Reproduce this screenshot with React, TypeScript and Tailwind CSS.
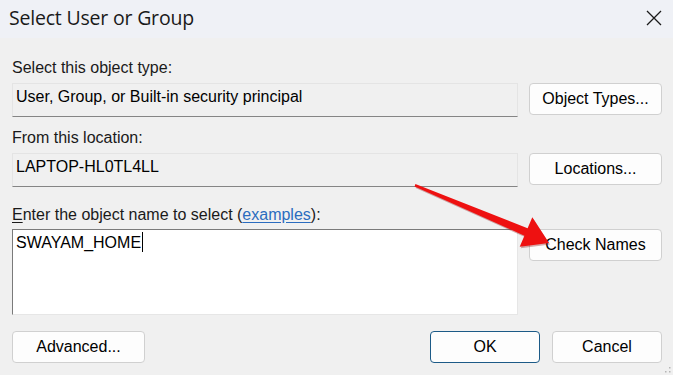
import React from "react";

const DialogButton = ({
  label,
  width = "w-[133px]",
  primary = false,
}: {
  label: string;
  width?: string;
  primary?: boolean;
}) => (
  <div
    className={`${width} h-[32px] flex items-center justify-center rounded-[4px] bg-[#fdfdfd] border ${
      primary ? "border-[#1c5a87]" : "border-[#d0d0d0]"
    } text-[16px] leading-[18px] text-black`}
  >
    {label}
  </div>
);

const ReadOnlyBox = ({ value }: { value: string }) => (
  <div className="w-[506px] h-[34px] bg-[#f0f0f0] border border-[#e4e4e4] border-b-[#858585] pl-[3px] pt-[4px] leading-[18px]">
    {value}
  </div>
);

export default function App() {
  return (
    <div className="relative w-[673px] h-[375px] overflow-hidden bg-[#f0f0f0] font-['Liberation_Sans',Arial,sans-serif] text-[16px] text-black">
      {/* Title bar */}
      <div className="h-[38px] bg-[#eff1f6] flex items-center justify-between pl-[9px] pr-[11px]">
        <span className="font-['Open_Sans',sans-serif] text-[19.5px] leading-[24px] tracking-[-0.2px] text-[#1a1a1a] mt-[-3px]">
          Select User or Group
        </span>
        <svg width="16" height="16" viewBox="0 0 16 16" className="mt-[-3px]">
          <path d="M1 1 L15 15 M15 1 L1 15" stroke="#1a1a1a" strokeWidth="1.3" />
        </svg>
      </div>

      {/* Body */}
      <div className="pl-[12px] pr-[11px]">
        <div className="mt-[21px] leading-[18px] text-[#1a1a1a]">Select this object type:</div>
        <div className="mt-[6px] flex justify-between items-start">
          <ReadOnlyBox value="User, Group, or Built-in security principal" />
          <DialogButton label="Object Types..." />
        </div>

        <div className="mt-[12px] leading-[18px] text-[#1a1a1a]">From this location:</div>
        <div className="mt-[6px] flex justify-between items-start">
          <ReadOnlyBox value="LAPTOP-HL0TL4LL" />
          <DialogButton label="Locations..." />
        </div>

        <div className="mt-[19px] leading-[18px] text-[#1a1a1a]">
          <span className="underline underline-offset-2">E</span>nter the object name to select (
          <span className="text-[#2a6cbf] underline underline-offset-2">examples</span>):
        </div>
        <div className="mt-[5px] flex justify-between items-start">
          <div className="w-[506px] h-[86px] bg-white border border-[#e6e6e6] border-l-[#7a7a7a] border-t-[#7a7a7a] pl-[3px] pt-[2px] leading-[18px]">
            SWAYAM_HOME
            <span className="inline-block w-px h-[20px] bg-black align-[-4px] ml-px" />
          </div>
          <DialogButton label="Check Names" />
        </div>

        <div className="mt-[16px] flex items-center">
          <DialogButton label="Advanced..." />
          <div className="flex-1" />
          <DialogButton label="OK" width="w-[110px]" primary />
          <div className="w-[12px]" />
          <DialogButton label="Cancel" width="w-[110px]" />
        </div>
      </div>

      {/* Red annotation arrow */}
      <svg
        className="absolute left-0 top-0 pointer-events-none"
        width="673"
        height="375"
        viewBox="0 0 673 375"
      >
        <polygon
          points="415.4,184 527.6,228.3 532.3,217.3 549,243 519.7,246.7 524.4,235.7 414.6,186.5"
          fill="#8b0d0d"
          opacity="0.35"
          transform="translate(1,1.5)"
        />
        <polygon
          points="415.4,184 527.6,228.3 532.3,217.3 549,243 519.7,246.7 524.4,235.7 414.6,186.5"
          fill="#ee1111"
        />
      </svg>

      {/* Resize grip */}
      <svg className="absolute right-[2px] bottom-[2px]" width="6" height="6" viewBox="0 0 6 6">
        <rect x="4" y="0" width="1.5" height="1.5" fill="#b5b5b5" />
        <rect x="4" y="4" width="1.5" height="1.5" fill="#b5b5b5" />
        <rect x="0" y="4" width="1.5" height="1.5" fill="#b5b5b5" />
      </svg>
    </div>
  );
}
